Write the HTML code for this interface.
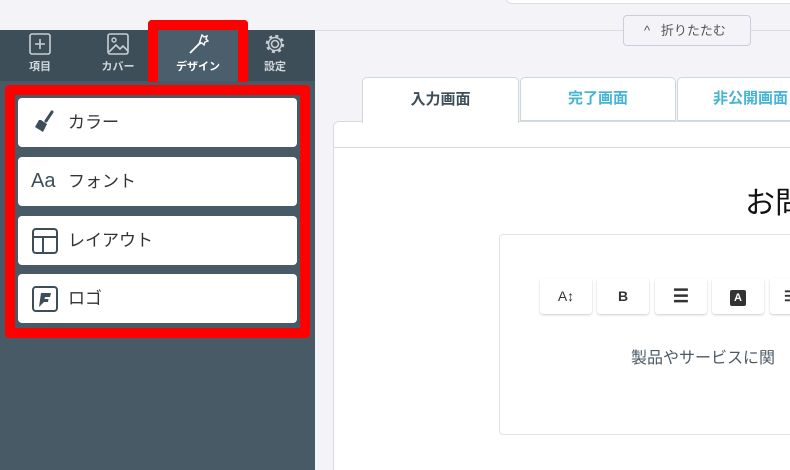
<!DOCTYPE html><html><head><meta charset="utf-8"><style>
*{box-sizing:border-box;margin:0;padding:0}
html,body{width:790px;height:470px;overflow:hidden}
body{background:#f4f4f8;font-family:"Liberation Sans","Noto Sans CJK JP",sans-serif;position:relative}
.a{position:absolute}
.side{left:0;top:30px;width:315px;height:440px;background:#475a66}
.tabs{left:0;top:30px;width:315px;height:51px;background:#3d4e59}
.t{position:absolute;top:30px;height:51px;width:80px;text-align:center;color:#d0d6da;font-size:11px;font-weight:bold}
.t svg{display:block;margin:3px auto 3px}
.item{position:absolute;left:18px;width:279px;height:49px;background:#fff;border-radius:4px;font-size:17px;color:#333;padding-left:50px;line-height:49px}
.item svg{position:absolute;left:14px;top:12px}
.btn{position:absolute;top:278px;width:52px;height:36px;background:#fff;border-radius:3px;box-shadow:0 1px 2px rgba(0,0,0,.2);font-size:14px;font-weight:bold;color:#333;text-align:center;line-height:36px}
</style></head><body>
<div class="a" style="left:505px;top:-10px;width:300px;height:14px;background:#fff;border:1px solid #ddd;border-radius:10px"></div>
<div class="a" style="left:315px;top:30px;width:475px;height:1px;background:#d8dbe0"></div>
<div class="a" style="left:623px;top:15px;width:128px;height:31px;background:#f4f4f8;border:1px solid #ccd;border-radius:4px;font-size:13px;color:#555;line-height:29px;padding-left:20px">^&nbsp;&nbsp;&nbsp;折りたたむ</div>
<div class="a side"></div>
<div class="a tabs"></div>
<div class="a" style="left:158px;top:30px;width:80px;height:51px;background:#4a5e6b"></div>
<div class="t" style="left:0"><svg width="22" height="22"><rect x="1" y="1" width="20" height="20" rx="2" fill="none" stroke="#c8cfd4" stroke-width="1.6"/><path d="M11 6v10M6 11h10" stroke="#c8cfd4" stroke-width="1.6"/></svg>項目</div>
<div class="t" style="left:78px"><svg width="22" height="22"><rect x="1" y="1" width="20" height="20" rx="2" fill="none" stroke="#c8cfd4" stroke-width="1.6"/><circle cx="7" cy="7" r="2" fill="none" stroke="#c8cfd4" stroke-width="1.4"/><path d="M2 19l7-7 4 4 3-3 5 5" fill="none" stroke="#c8cfd4" stroke-width="1.6"/></svg>カバー</div>
<div class="t" style="left:158px;color:#fff"><svg width="22" height="22"><path d="M3 20L14 9" stroke="#fff" stroke-width="1.8"/><path d="M15 2l2 2 3-1-1 3 2 2-3 1-1 3-2-2-3 1 1-3z" fill="none" stroke="#fff" stroke-width="1.4"/></svg>デザイン</div>
<div class="t" style="left:235px"><svg width="22" height="22"><circle cx="11" cy="11" r="3.5" fill="none" stroke="#c8cfd4" stroke-width="1.6"/><circle cx="11" cy="11" r="8" fill="none" stroke="#c8cfd4" stroke-width="2.5" stroke-dasharray="3 3.3"/><circle cx="11" cy="11" r="6.5" fill="none" stroke="#c8cfd4" stroke-width="1.4"/></svg>設定</div>
<div class="a" style="left:148px;top:20px;width:100px;height:62px;border:10px solid #f00;border-bottom:none;border-radius:4px 4px 0 0"></div>
<div class="a" style="left:5px;top:85px;width:305px;height:253px;border:10px solid #f00;border-radius:4px"></div>
<div class="item" style="top:98px"><svg width="24" height="24"><path d="M20 2l-6 9" stroke="#3d4e59" stroke-width="3" stroke-linecap="round"/><path d="M9 10l6 4-4 8-8-5 4-7z" fill="#3d4e59"/></svg>カラー</div>
<div class="item" style="top:157px"><span style="position:absolute;left:13px;font-size:20px;color:#3d4e59">Aa</span>フォント</div>
<div class="item" style="top:216px"><svg width="26" height="26"><rect x="1" y="1" width="24" height="24" rx="3" fill="none" stroke="#3d4e59" stroke-width="2"/><path d="M1 9h24M11 9v16" stroke="#3d4e59" stroke-width="2"/></svg>レイアウト</div>
<div class="item" style="top:274px"><svg width="26" height="26"><rect x="1" y="1" width="24" height="24" rx="3" fill="none" stroke="#3d4e59" stroke-width="2"/><path d="M7 21l2-14h10l-1 4h-5l-.5 2h4l-.5 3h-4" fill="#3d4e59"/></svg>ロゴ</div>
<div class="a" style="left:333px;top:121px;width:470px;height:360px;background:#fff;border:1px solid #d5dde2;border-radius:6px"></div>
<div class="a" style="left:334px;top:147px;width:456px;height:1px;background:#d5dde2"></div>
<div class="a" style="left:362px;top:77px;width:157px;height:46px;background:#fff;border:1px solid #ccd8de;border-bottom:none;border-radius:5px 5px 0 0;text-align:center;line-height:44px;font-size:15px;font-weight:bold;color:#3d4e59">入力画面</div>
<div class="a" style="left:520px;top:77px;width:156px;height:44px;background:#fff;border:1px solid #ccd8de;border-radius:5px 5px 0 0;text-align:center;line-height:42px;font-size:15px;font-weight:bold;color:#44b4d4">完了画面</div>
<div class="a" style="left:677px;top:77px;width:156px;height:44px;background:#fff;border:1px solid #ccd8de;border-radius:5px 5px 0 0;padding-left:35px;line-height:42px;font-size:15px;font-weight:bold;color:#44b4d4;white-space:nowrap">非公開画面</div>
<div class="a" style="left:745px;top:178px;font-size:30px;color:#111;white-space:nowrap">お問</div>
<div class="a" style="left:499px;top:234px;width:300px;height:201px;border:1px solid #e3e3e3;border-radius:4px"></div>
<div class="btn" style="left:540px;font-weight:normal">A↕</div>
<div class="btn" style="left:597px">B</div>
<div class="btn" style="left:655px;font-size:18px">☰</div>
<div class="btn" style="left:712px"><span style="display:inline-block;width:16px;height:16px;background:#333;color:#fff;border-radius:2px;line-height:16px;font-size:11px">A</span></div>
<div class="btn" style="left:770px;text-align:left;padding-left:14px">☰</div>
<div class="a" style="left:631px;top:344px;font-size:16px;color:#4a5a66;white-space:nowrap">製品やサービスに関</div>
</body></html>
